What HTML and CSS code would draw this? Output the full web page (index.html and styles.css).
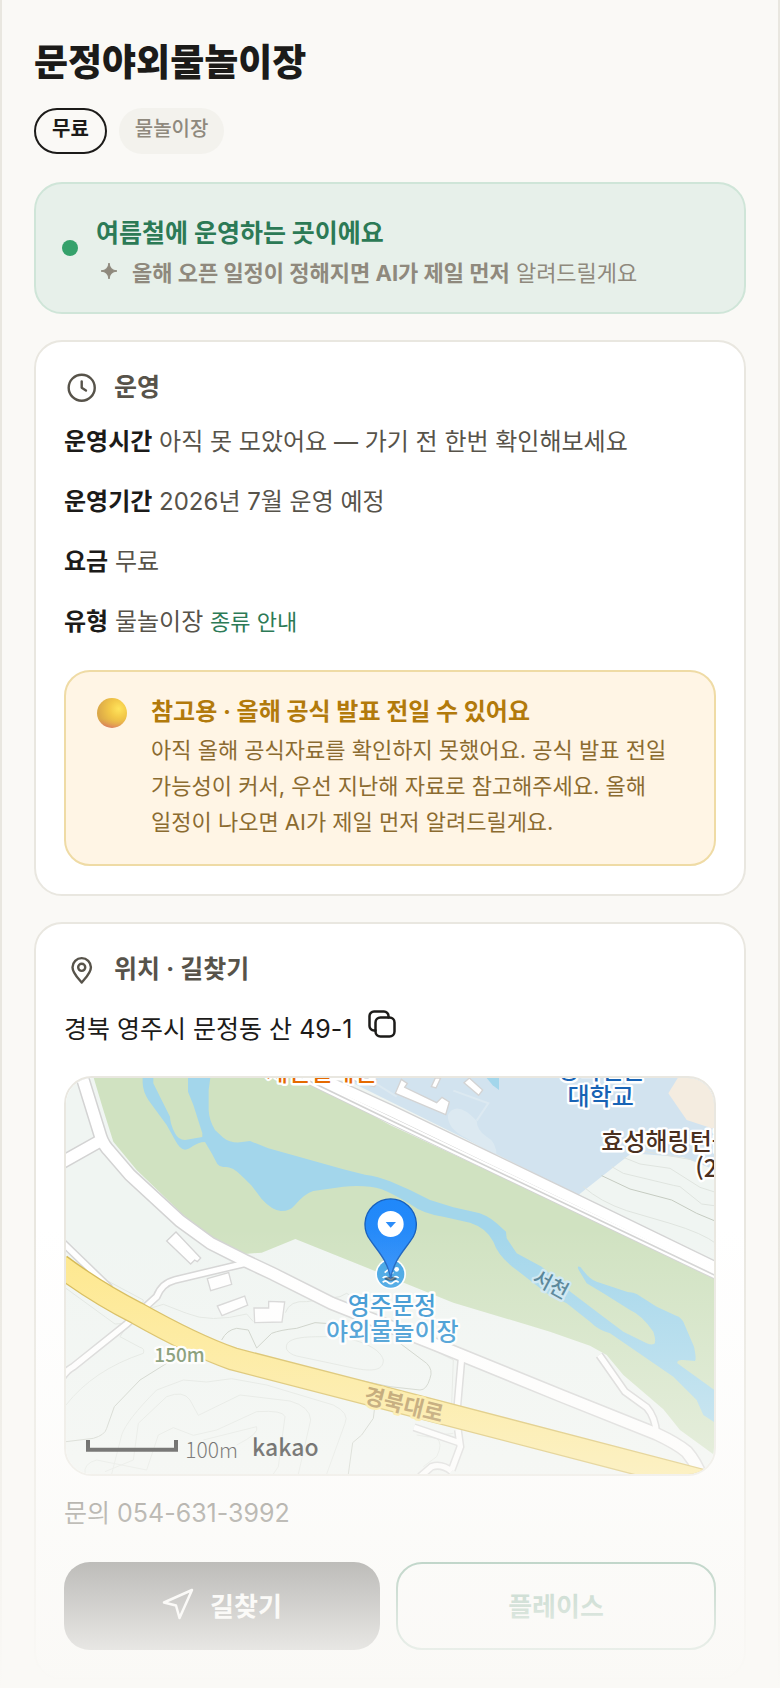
FILE: index.html
```html
<!DOCTYPE html>
<html lang="ko">
<head>
<meta charset="utf-8">
<meta name="viewport" content="width=device-width, initial-scale=1">
<title>문정야외물놀이장</title>
<link rel="stylesheet" href="styles.css">
</head>
<body>
<main class="page">
  <h1 class="title">문정야외물놀이장</h1>
  <div class="chips">
    <span class="chip chip-strong">무료</span>
    <span class="chip">물놀이장</span>
  </div>

  <section class="status">
    <span class="status-dot"></span>
    <div class="status-body">
      <p class="status-title">여름철에 운영하는 곳이에요</p>
      <p class="status-sub">
        <svg class="spark" viewBox="0 0 24 24" aria-hidden="true"><path d="M13 2Q13.800 9.200 21 10Q13.800 10.800 13 18Q12.200 10.800 5 10Q12.200 9.200 13 2Z"/></svg>
        <span><b>올해 오픈 일정이 정해지면 AI가 제일 먼저</b> 알려드릴게요</span>
      </p>
    </div>
  </section>

  <section class="card">
    <h2 class="card-head">
      <svg class="line-icon" viewBox="0 0 24 24" aria-hidden="true"><circle cx="12.500" cy="12.500" r="9.200"/><path d="M12.500 8V12.500l3 2"/></svg>
      운영
    </h2>
    <dl class="facts">
      <div><dt>운영시간</dt> <dd>아직 못 모았어요 — 가기 전 한번 확인해보세요</dd></div>
      <div><dt>운영기간</dt> <dd>2026년 7월 운영 예정</dd></div>
      <div><dt>요금</dt> <dd>무료</dd></div>
      <div><dt>유형</dt> <dd>물놀이장 <a class="kind-link" href="#kinds">종류 안내</a></dd></div>
    </dl>
    <div class="caution">
      <span class="orb"></span>
      <div>
        <p class="caution-title">참고용 · 올해 공식 발표 전일 수 있어요</p>
        <p class="caution-text">아직 올해 공식자료를 확인하지 못했어요. 공식 발표 전일 가능성이 커서, 우선 지난해 자료로 참고해주세요. 올해 일정이 나오면 AI가 제일 먼저 알려드릴게요.</p>
      </div>
    </div>
  </section>

  <section class="card">
    <h2 class="card-head">
      <svg class="line-icon" viewBox="0 0 24 24" aria-hidden="true"><path d="M12.500 21.500C10 18.500 6 15 6 10.800a6.500 6.500 0 0 1 13 0C19 15 15 18.500 12.500 21.500Z"/><circle cx="12.500" cy="10.800" r="2.500"/></svg>
      위치 · 길찾기
    </h2>
    <div class="address">
      <span>경북 영주시 문정동 산 49-1</span>
      <button class="copy" type="button" aria-label="주소 복사">
        <svg viewBox="0 0 28 28" aria-hidden="true"><rect x="7.500" y="7.500" width="19" height="19" rx="5"/><path d="M7.500 20.500H6A4.500 4.500 0 0 1 1.500 16V6A4.500 4.500 0 0 1 6 1.500H16A4.500 4.500 0 0 1 20.500 6V7.500"/></svg>
      </button>
    </div>
    <div class="map">
      <svg viewBox="18 24 1944 1188" preserveAspectRatio="xMidYMid slice" role="img" aria-label="지도">
        <defs>
          <linearGradient id="pin" x1="0" y1="0" x2="0" y2="1"><stop offset="0" stop-color="#2088fa"/><stop offset="1" stop-color="#2a8cf8"/></linearGradient>
        </defs>
        <rect class="land" x="0" y="0" width="2000" height="1240"/>
        <path class="campus" d="M800 0L1555 375L1714 250L1870 262L1990 310V0Z"/>
        <path class="beige" d="M1868 0L1825 70L1880 150L1990 186V0Z"/>
        <path class="water" d="M1280 24L1298 46L1317 60V24Z"/>
        <path class="campus-area" d="M1164 134Q1190 90 1250 152Q1250 180 1280 200Q1310 215 1310 260L1220 205Q1160 175 1164 134Z"/>
        <path class="campus-path" d="M1250 152L1285 100L1180 62M920 24L1010 80"/>
        <path class="park" d="M94 0L130 120L160 215L230 300L370 435L460 505L555 552L605 548L706 507L945 603L1035 640L1180 698L1470 785L1590 827L1640 855L1690 915L1810 1018L1860 1080L1990 1175V630L990 165L690 0Z"/>
        <path class="water" d="M248 0V40Q249 65 265 90L320 165L345 210Q360 239 375 239C392 239 405 216 435 216L455 250L472 282Q478 290 490 291C520 290 530 302 575 347L605 387Q635 420 662 423Q690 424 705 405Q735 370 760 363L850 350Q920 344 965 358Q1000 372 1050 402Q1090 432 1150 440L1230 458Q1280 474 1300 515Q1315 560 1370 600L1460 670L1520 700L1590 755Q1615 780 1650 790L1840 920L1910 990L1930 1035L1990 1075V980L1905 918L1852 880Q1850 868 1870 870L1905 873Q1910 868 1902 830L1870 755Q1860 740 1850 738L1790 710L1730 672Q1715 665 1705 667L1610 635Q1590 630 1562 592Q1550 585 1555 598L1580 640L1630 670L1710 720Q1745 735 1780 785Q1790 815 1782 822Q1770 825 1760 820L1690 785L1630 740L1535 668L1445 590L1370 550L1340 505L1338 485L1310 460Q1280 432 1240 425L1180 412L1110 390L1050 360L990 334Q955 319 915 314L850 298L625 235L570 213L540 217Q510 219 490 203L465 180Q447 150 446 120V60L454 0H384V65L400 105L427 190V201L375 210Q355 210 345 190Q330 160 330 140L300 80L280 40V0Z"/>

        <g class="contour">
          <path d="M1570 350Q1620 395 1700 422L1830 460Q1930 490 1970 522M1655 290L1690 310L1840 346L1860 350L1925 402L1970 408M1690 262L1740 282L1830 295L1920 352L1970 368M1730 240L1900 270"/>
          <path class="contour-dark" d="M1625 317L1710 357L1835 390L1910 430L1970 455"/>
          <path d="M18 655L165 762L200 760M110 615L250 690L248 700L270 715L310 703L380 730Q450 760 560 732L580 755M676 728Q690 690 740 695L840 680L860 670L880 682"/>
          <path d="M680 838C670 800 740 800 800 800C880 800 960 830 970 870C970 905 930 905 870 892L710 858Q688 852 680 838Z"/>
          <path d="M18 1005Q100 900 250 850Q255 835 240 832L180 800L200 770M155 1212L185 1095Q200 1050 290 960L370 930L440 936L515 926L620 945L820 1005Q870 1030 855 1060L800 1212M135 1205L220 1170L235 1060L320 980Q370 960 390 990L415 1036L540 975L690 993Q750 1010 752 1050L715 1212"/>
          <path d="M75 1212Q70 1180 110 1170L260 1200L295 1095L340 1073L400 1096L470 1080L590 1025Q670 1020 675 1040L655 1190L640 1212M430 1110L590 1070Q600 1090 530 1125"/>
          <path class="contour-dark" d="M18 1115L100 1105Q135 1095 140 1075L163 1010L240 930L320 880M485 810Q500 780 530 775L565 780L590 834L635 790Q660 780 710 775L765 758L870 765M943 1020L940 1045L905 1095L878 1118L865 1212M1020 820L1100 880Q1120 900 1110 925Q1100 960 1080 960L990 950L870 925"/>
          <path d="M1110 835L1180 870L1175 1000M1070 1095L1130 1105Q1150 1120 1130 1160L1090 1190M1100 1100L1180 1090"/>
        </g>

        <g class="building">
          <path d="M320 513L348 486L422 564L412 575L404 570L392 582Z"/>
          <path d="M442 626L506 608L515 643L452 662Z"/>
          <path d="M472 708L554 678L563 705L486 737Z"/>
          <path d="M582 714H626V694L674 696L666 756L584 758Z"/>
          <path d="M1024 28L1042 40L1034 52L1130 98L1146 82L1168 96L1157 134L1006 70Z"/>
          <path d="M1228 24L1268 60L1256 76L1212 38Z"/>
          <path d="M1126 24L1114 50L1128 54L1142 24Z"/>
          <path d="M850 14L950 30L944 50L900 40Z"/>
        </g>

        <g class="road-edge">
          <path stroke-width="25" d="M0 510L150 655M-10 955Q10 905 40 890L200 762L290 680Q305 640 345 630L555 580"/>
          <path stroke-width="25" d="M1206 850L1191 1020M1194 1080L1201 1130L1175 1200M1062 1072L1198 1118M1175 1204Q1145 1180 1115 1190L1080 1220M1618 855L1695 965L1760 1012Q1785 1040 1790 1092"/>
          <path stroke-width="42" d="M-10 286L122 212M60 0L122 200Q130 225 150 245L210 315L360 453L452 520L555 572L640 612L815 700L1130 825L1500 976L1790 1092Q1850 1120 1880 1145Q1910 1180 1925 1225"/>
          <path stroke-width="24" d="M680 0L990 150L1980 623"/>
          <path stroke-width="38" d="M725 0L990 121L1555 393L1980 599"/>
        </g>
        <g class="road">
          <path stroke-width="16" d="M0 510L150 655M-10 955Q10 905 40 890L200 762L290 680Q305 640 345 630L555 580"/>
          <path stroke-width="16" d="M1206 850L1191 1020M1194 1080L1201 1130L1175 1200M1062 1072L1198 1118M1175 1204Q1145 1180 1115 1190L1080 1220M1618 855L1695 965L1760 1012Q1785 1040 1790 1092"/>
          <path stroke-width="33" d="M-10 286L122 212M60 0L122 200Q130 225 150 245L210 315L360 453L452 520L555 572L640 612L815 700L1130 825L1500 976L1790 1092Q1850 1120 1880 1145Q1910 1180 1925 1225"/>
          <path stroke-width="18" d="M680 0L990 150L1980 623"/>
          <path stroke-width="30" d="M725 0L990 121L1555 393L1980 599"/>
        </g>
        <path class="rail" d="M680 0L990 150L1980 623"/>
        <path class="highway-edge" d="M0 586Q110 668 230 729Q400 825 520 867L1020 996L1970 1243"/>
        <path class="highway" d="M0 586Q110 668 230 729Q400 825 520 867L1020 996L1970 1243"/>

        <g class="label">
          <text class="label-store" x="618" y="32">세인빌레인</text>
          <text class="label-school" x="1623" y="28" text-anchor="middle">경북전문</text>
          <text class="label-school" x="1622" y="104" text-anchor="middle">대학교</text>
          <text class="label-apt" x="1624" y="240">효성해링턴플레이스</text>
          <text class="label-apt" x="1906" y="320">(2단지)</text>
          <text class="label-river" x="1414" y="636" transform="rotate(28 1414 636)">서천</text>
          <text class="label-road" x="908" y="998" transform="rotate(14 908 998)">경북대로</text>
          <text class="label-height" x="283" y="876">150m</text>
        </g>

        <circle cx="992" cy="612" r="46" fill="#fff"/>
        <circle cx="992" cy="612" r="41" fill="#3fa3e4"/>
        <path class="waves" d="M968 624Q976 616 984 624T1000 624T1016 624M968 637Q976 629 984 637T1000 637T1016 637M974 608L986 598L1000 610"/>
        <circle cx="1010" cy="598" r="7" fill="#fff"/>
        <ellipse cx="992" cy="626" rx="18" ry="6" fill="#123" opacity=".6"/>
        <path d="M992 625C982 570 953 543 932 512A77 77 0 1 1 1052 512C1031 543 1002 570 992 625Z" fill="url(#pin)" stroke="#1760bd" stroke-width="4"/>
        <circle cx="992" cy="462" r="39" fill="#fff"/>
        <path d="M977 456H1008L992 473Z" fill="#2b8cf9"/>
        <g class="label">
          <text class="label-place" x="996" y="732" text-anchor="middle">영주문정</text>
          <text class="label-place" x="997" y="811" text-anchor="middle">야외물놀이장</text>
        </g>
        <path class="scale" d="M84 1110V1139H348V1110"/>
        <text class="scale-text" x="376" y="1163">100m</text>
        <text class="brand" x="576" y="1157">kakao</text>
      </svg>
    </div>
    <p class="contact">문의 <a href="tel:054-631-3992">054-631-3992</a></p>
    <div class="actions">
      <button class="btn btn-primary" type="button">
        <svg class="nav-icon" viewBox="0 0 32 32" aria-hidden="true"><path d="M30 2L2 14.500L14 17.500L17.500 30Z"/></svg>
        길찾기
      </button>
      <button class="btn btn-outline" type="button">플레이스</button>
    </div>
  </section>
  <div class="fade"></div>
</main>
</body>
</html>
```

FILE: styles.css
```css
* {
  box-sizing: border-box;
}

body {
  margin: 0;
  background: #faf9f6;
  color: #1c1b19;
  font-family: Inter, "Noto Sans CJK KR", sans-serif;
  font-size: 25px;
  line-height: 40px;
  word-break: keep-all;
}

h1, h2, p, dl, dd {
  margin: 0;
}

a {
  color: inherit;
  text-decoration: none;
}

.page {
  position: relative;
  min-height: 100vh;
  padding: 37px 32px 8px;
  border: solid #e9e7e0;
  border-width: 0 2px;
}

.title {
  font-size: 37px;
  line-height: 52px;
  font-weight: 800;
}

.chips {
  display: flex;
  gap: 12px;
  margin: 19px 0 28px;
}

.chip {
  padding: 6px 16px 10px;
  border-radius: 23px;
  background: #f3f2ed;
  color: #8f897d;
  font-size: 20px;
  line-height: 30px;
  font-weight: 500;
}

.chip-strong {
  padding: 4px 16px 8px;
  border: 2px solid #1c1b19;
  background: transparent;
  color: #1c1b19;
  font-weight: 700;
}

.status {
  display: flex;
  align-items: center;
  gap: 18px;
  padding: 20px 26px;
  border: 2px solid #cfe5d8;
  border-radius: 28px;
  background: #e7f0ea;
}

.status-dot {
  flex: none;
  width: 16px;
  height: 16px;
  border-radius: 50%;
  background: #35a16b;
}

.status-body {
  padding-top: 8px;
}

.status-title {
  color: #2c7a56;
  line-height: 42px;
  font-weight: 700;
}

.status-sub {
  display: flex;
  align-items: center;
  gap: 12px;
  color: #8f897d;
  font-size: 22px;
  line-height: 38px;
}

.spark {
  flex: none;
  width: 24px;
  height: 24px;
  fill: #8f897d;
  stroke: #8f897d;
}

.card {
  margin-top: 26px;
  padding: 28px;
  border: 2px solid #e9e7e0;
  border-radius: 28px;
  background: #fff;
}

.card-head {
  display: flex;
  align-items: center;
  gap: 16px;
  color: #57534a;
  font-size: 25px;
  line-height: 34px;
  font-weight: 700;
}

.line-icon {
  width: 34px;
  height: 34px;
  fill: none;
  stroke: currentColor;
  stroke-width: 1.700;
  stroke-linecap: round;
  stroke-linejoin: round;
}

.facts {
  display: grid;
  gap: 20px;
  margin: 18px 0 28px;
  color: #57534a;
  font-size: 24px;
}

.facts dt,
.facts dd {
  display: inline;
}

.facts dt {
  color: #1c1b19;
  font-weight: 700;
}

.kind-link {
  color: #2c7a56;
  font-size: 22px;
  line-height: 30px;
}

.caution {
  display: flex;
  gap: 24px;
  padding: 20px 31px 24px;
  border: 2px solid #efdba5;
  border-radius: 26px;
  background: #fff5e5;
}

.orb {
  flex: none;
  width: 30px;
  height: 30px;
  margin-top: 6px;
  border-radius: 50%;
  background:
    radial-gradient(circle at 72% 36%, #ffe45c 0, #f3c848 32%, rgba(222, 170, 62, 0) 72%),
    linear-gradient(#dba848 70%, #dc7d60);
}

.caution-title {
  color: #b27a0b;
  font-size: 24px;
  font-weight: 700;
}

.caution-text {
  color: #8b6b30;
  font-size: 22px;
  line-height: 36px;
}

.address {
  display: flex;
  align-items: center;
  gap: 16px;
  margin: 23px 0 27px;
}

.copy {
  display: flex;
  padding: 0 0 10px;
  border: 0;
  background: none;
  color: #1c1b19;
}

.copy svg {
  width: 28px;
  height: 28px;
  fill: none;
  stroke: currentColor;
  stroke-width: 2.500;
  stroke-linecap: round;
}

.map {
  height: 400px;
  overflow: hidden;
  border: 2px solid #e9e7e0;
  border-radius: 28px;
}

.map svg {
  display: block;
  width: 100%;
  height: 100%;
}

.land { fill: #f0f5f2; }
.campus { fill: #d2e3ef; }
.campus-area { fill: #dce9f1; }
.campus-path { fill: none; stroke: #dce9f1; stroke-width: 6; }
.beige { fill: #f4ece0; }
.park { fill: #d0e2c1; }
.water { fill: #a3d6eb; }
.contour { fill: none; stroke: #dfe4df; stroke-width: 3; }
.contour-dark { stroke: #c5cbc1; }
.building { fill: #fff; stroke: #d3d3d3; stroke-width: 4; }
.road-edge { fill: none; stroke: #d3d3d3; }
.road { fill: none; stroke: #fff; }
.rail { fill: none; stroke: #d3d3d3; stroke-width: 5; }
.highway-edge { fill: none; stroke: #d3b54a; stroke-width: 71; }
.highway { fill: none; stroke: #fee789; stroke-width: 63; }
.waves { fill: none; stroke: #fff; stroke-width: 5; }

.label {
  font-family: "Noto Sans CJK KR", sans-serif;
  font-size: 72px;
  font-weight: 500;
  paint-order: stroke;
  stroke: #fff;
  stroke-width: 14px;
  stroke-linejoin: round;
}

.label-store { fill: #e56a00; }
.label-school { fill: #1763b5; }
.label-apt { fill: #4a3020; }
.label-place { fill: #278dcf; }
.label-river { fill: #47798f; stroke: #cbe6f2; font-size: 60px; }
.label-road { fill: #a9833b; stroke: #fee789; font-size: 66px; font-weight: 700; }
.label-height { fill: #648151; font-size: 57px; }

.scale {
  fill: none;
  stroke: #000;
  stroke-width: 12;
}

.scale-text {
  font-family: "Noto Sans CJK KR", sans-serif;
  font-size: 63px;
  font-weight: 300;
}

.brand {
  font-family: "Noto Sans CJK KR", sans-serif;
  font-size: 69px;
  font-weight: 500;
}

.contact {
  margin: 17px 0 29px;
  color: #57534a;
}

.actions {
  display: flex;
  gap: 16px;
}

.btn {
  display: flex;
  flex: 1;
  align-items: center;
  justify-content: center;
  gap: 16px;
  min-height: 88px;
  padding: 0 0 4px;
  border: 0;
  border-radius: 26px;
  font-family: inherit;
  font-size: 26px;
  font-weight: 700;
}

.btn-primary {
  background: #1c1b19;
  color: #fff;
}

.btn-outline {
  border: 2px solid #2c7a56;
  background: #fff;
  color: #2c7a56;
}

.nav-icon {
  width: 32px;
  height: 32px;
  fill: none;
  stroke: currentColor;
  stroke-width: 2.500;
  stroke-linejoin: round;
}

.fade {
  position: absolute;
  right: -2px;
  bottom: 0;
  left: -2px;
  height: 460px;
  background: linear-gradient(rgba(250, 249, 246, 0), #faf9f6);
  pointer-events: none;
}
```
